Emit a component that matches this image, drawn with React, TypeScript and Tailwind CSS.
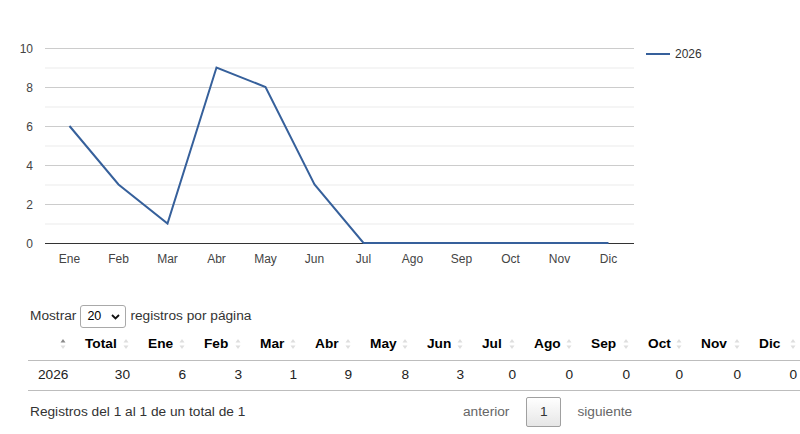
import React from 'react';

const months = ['Ene', 'Feb', 'Mar', 'Abr', 'May', 'Jun', 'Jul', 'Ago', 'Sep', 'Oct', 'Nov', 'Dic'];
const values = [6, 3, 1, 9, 8, 3, 0, 0, 0, 0, 0, 0];

// chart geometry
const left = 45;
const step = 49;
const top = 48;
const unit = 19.5;
const xAt = (i: number) => left + step / 2 + i * step;
const yAt = (v: number) => top + (10 - v) * unit;

function Chart() {
  const points = values.map((v, i) => `${xAt(i)},${yAt(v)}`).join(' ');
  return (
    <svg width={800} height={280} className="block" style={{ fontFamily: '"Liberation Sans", Arial, sans-serif' }}>
      {Array.from({ length: 10 }, (_, k) => {
        const v = 10 - k;
        const y = yAt(v);
        const major = v % 2 === 0;
        return (
          <line key={v} x1={left} x2={634} y1={y + 0.5} y2={y + 0.5} stroke={major ? '#cccccc' : '#ebebeb'} strokeWidth={1} />
        );
      })}
      {[10, 8, 6, 4, 2, 0].map((v) => (
        <text key={v} x={33} y={yAt(v) + 4.5} textAnchor="end" fontSize={12} fill="#444">
          {v}
        </text>
      ))}
      <line x1={left} x2={634} y1={yAt(0) + 0.5} y2={yAt(0) + 0.5} stroke="#333" strokeWidth={1} />
      <polyline points={points} fill="none" stroke="#36609b" strokeWidth={2} strokeLinejoin="miter" />
      {months.map((m, i) => (
        <text key={m} x={xAt(i)} y={263} textAnchor="middle" fontSize={12} fill="#444">
          {m}
        </text>
      ))}
      {/* legend */}
      <line x1={646} x2={670} y1={54} y2={54} stroke="#36609b" strokeWidth={2} />
      <text x={675} y={58} fontSize={12} fill="#333">
        2026
      </text>
    </svg>
  );
}

function SortIcon({ active }: { active?: boolean }) {
  return (
    <svg width={6} height={12} viewBox="0 0 6 12" className="absolute right-[9px] top-1/2 -translate-y-1/2">
      <path d="M3 1 L5.5 4.5 H0.5 Z" fill={active ? '#8a8a8a' : '#dedede'} />
      <path d="M3 11 L5.5 7.5 H0.5 Z" fill="#dedede" />
    </svg>
  );
}

const headers = ['', 'Total', ...months];
const widths = [47, 63, 56, 56, 55, 55, 57, 55, 52, 57, 57, 53, 58, 56];
const row = ['2026', '30', ...values.map(String)];

export default function App() {
  return (
    <div
      className="relative h-[434px] w-[800px] overflow-hidden bg-white text-[13.7px] text-[#333]"
      style={{ fontFamily: '"Liberation Sans", Arial, sans-serif' }}
    >
      <Chart />

      <div className="mt-[25px] pl-[30px]">
        <div className="flex h-[23px] items-center">
          <span>Mostrar</span>
          <div className="ml-[4px] flex h-[23px] w-[46px] items-center justify-between rounded-[3px] border border-[#a9a9a9] bg-white pl-[6px] pr-[5px] text-[12.5px] text-black">
            <span>20</span>
            <svg width={9} height={6} viewBox="0 0 9 6">
              <path d="M1 1 L4.5 4.5 L8 1" fill="none" stroke="#111" strokeWidth={1.8} />
            </svg>
          </div>
          <span className="ml-[4px]">registros por página</span>
        </div>
      </div>

      <div className="ml-[28px] w-[780px]">
        <div className="flex h-[33px] items-center border-b border-[#bdbdbd]">
          {headers.map((h, i) => (
            <div
              key={i}
              className="relative flex h-full shrink-0 items-center pl-[10px] font-bold text-black"
              style={{ width: widths[i] }}
            >
              {h}
              <SortIcon active={i === 0} />
            </div>
          ))}
        </div>
        <div className="flex h-[30px] items-center border-b border-[#bdbdbd] text-[#222]">
          {row.map((c, i) => (
            <div
              key={i}
              className={i === 0 ? 'shrink-0 pl-[10px]' : 'shrink-0 pr-[8px] text-right'}
              style={{ width: widths[i] }}
            >
              {c}
            </div>
          ))}
        </div>
      </div>

      <div className="flex h-[42px] items-center pl-[30px]">
        <span className="w-[433px]">Registros del 1 al 1 de un total de 1</span>
        <span className="text-[#666]">anterior</span>
        <span className="ml-[17px] flex h-[30px] w-[35px] items-center justify-center rounded-[2px] border border-[#a0a0a0] bg-gradient-to-b from-white to-[#e6e6e6] text-[#333]">
          1
        </span>
        <span className="ml-[16px] text-[#666]">siguiente</span>
      </div>
    </div>
  );
}
